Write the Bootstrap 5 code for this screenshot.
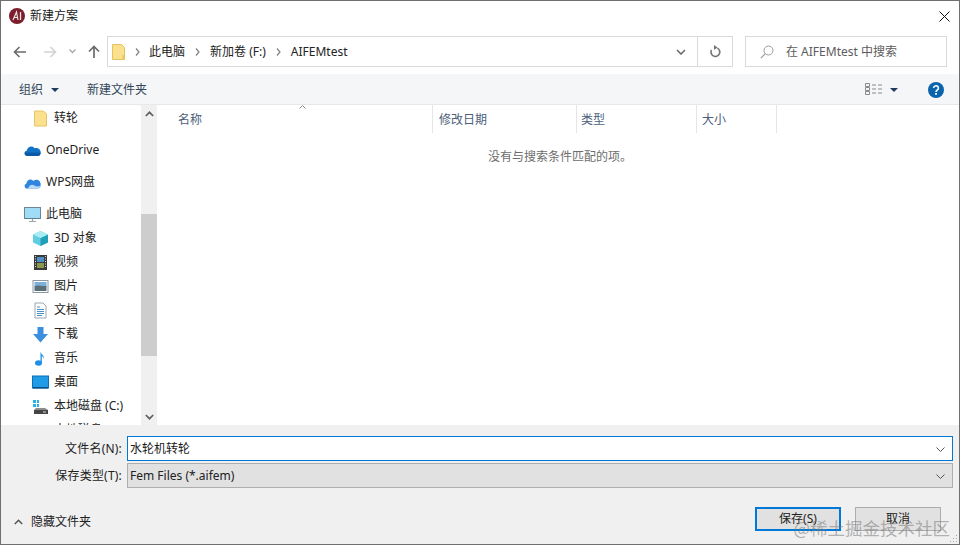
<!DOCTYPE html>
<html lang="zh-CN">
<head>
<meta charset="UTF-8">
<title>新建方案</title>
<link href="https://cdn.jsdelivr.net/npm/bootstrap@5.3.0/dist/css/bootstrap.min.css" rel="stylesheet">
<style>
html, body { height: 100%; margin: 0; overflow: hidden; background: #fff; }
body { font-family: "Noto Sans", "Noto Sans CJK SC", sans-serif; font-size: 12px; line-height: 16px; color: #1a1a1a; }
svg { display: block; flex: none; }
.win { width: 960px; height: 545px; border: 1px solid #6f6f6f; position: relative; background: #fff; }
.titlebar { height: 30px; padding: 0 9px 0 8px; gap: 5px; }
.addr-row { height: 43px; padding: 5px 0 7px 0; }
.navbtns { width: 106px; padding-left: 12px; gap: 13px; }
.fwd-btn { margin-left: 3px; }
.drop-btn { margin-left: -1px; }
.up-btn { margin-left: -1px; }
.addr { width: 626px; height: 31px; border: 1px solid #d9d9d9; }
.addr-path { padding-left: 4px; gap: 8px; color: #222; }
.crumb { margin: 0 2px; }
.crumb-first { margin: 0 1px 0 2px; }
.addr-chev { margin-right: 11px; }
.addr-drop { width: 35px; border-left: 1px solid #d9d9d9; height: 100%; }
.search { width: 202px; height: 31px; margin-left: 12px; border: 1px solid #d9d9d9; padding-left: 14px; gap: 12px; color: #5c5c5c; }
.tools { height: 31px; background: #f5f6f7; border-bottom: 1px solid #e8e8e8; padding: 1px 15px 0 18px; color: #33475b; }
.new-dir { margin-left: 28px; }
.view-caret { margin-left: 8px; }
.help-ico { margin-left: 30px; }
.main-area { height: 320px; }
.side { width: 140px; padding-top: 1px; overflow: hidden; }
.navrow { height: 24px; gap: 5px; white-space: nowrap; color: #222; }
.navrow.ind { padding-left: 31px; }
.navrow.top { padding-left: 23px; }
.navrow.gapped { margin-bottom: 8px; }
.navrow .ico { width: 17px; height: 17px; }
.sbar { width: 16px; background: #f0f0f0; }
.sbar-arrow { height: 17px; }
.sbar-space { height: 92px; }
.sbar-thumb { height: 142px; background: #cdcdcd; }
.files { padding-left: 5px; }
.head-row { height: 28px; }
.hcell { height: 100%; padding: 7px 0 0 6px; border-right: 1px solid #e5e5e5; color: #4c607a; position: relative; }
.w-name { width: 271px; padding-left: 16px; }
.w-date { width: 144px; }
.w-type { width: 120px; padding-left: 4px; }
.w-size { width: 80px; padding-left: 5px; }
.sort-mark { position: absolute; left: 137px; top: 0; }
.empty-msg { margin-top: 16px; padding-right: 1px; color: #6d6d6d; }
.bottom { height: 119px; background: #f0f0f0; }
.form-pane { padding-top: 11px; }
.form-line { height: 25px; margin-bottom: 2px; }
.lbl { width: 126px; padding: 1px 5px 0 0; text-align: right; color: #222; white-space: nowrap; letter-spacing: .2px; }
.fld { width: 826px; height: 100%; padding: 1px 7px 0 2px; }
.fld-name { background: #fff; border: 1px solid #0078d7; }
.fld-type { background: #e1e1e1; border: 1px solid #adadad; color: #222; }
.act-row { height: 24px; margin-top: 17px; padding-right: 18px; }
.hide-dirs { padding: 5px 0 0 13px; gap: 8px; color: #222; }
.dlg-btn { width: 86px; height: 24px; background: #e1e1e1; border: 1px solid #adadad; color: #222; line-height: 20px; text-align: center; font-size: 12px; padding: 0; border-radius: 0; }
.dlg-btn.dflt { border: 2px solid #0078d7; outline: 1px solid #0078d7; outline-offset: -1px; margin-right: 14px; }
.wmark { position: absolute; right: 9px; bottom: 4px; font-size: 17.5px; line-height: 24px; color: rgba(120,120,120,.55); white-space: nowrap; font-family: "Noto Sans CJK SC", sans-serif; pointer-events: none; }
.grip { position: absolute; right: 1px; bottom: 1px; }
</style>
</head>
<body>
<div class="win d-flex flex-column">

    <div class="titlebar d-flex align-items-center">
        <svg width="16" height="16" viewBox="0 0 16 16"><circle cx="8" cy="8" r="8" fill="#7a1f2b"/><path d="M4 12 7.500 4 9 12M5 9.500h4" stroke="#f2e4e4" stroke-width="1.200" fill="none"/><path d="M11.500 4v8" stroke="#f2e4e4" stroke-width="1.300"/></svg>
        <span>新建方案</span>
        <svg class="ms-auto" width="11" height="11" viewBox="0 0 11 11"><path d="M.5.500l10 10M10.500.500l-10 10" stroke="#111" stroke-width="1"/></svg>
    </div>

    <div class="addr-row d-flex align-items-center">
        <div class="navbtns d-flex align-items-center">
            <svg width="14" height="12" viewBox="0 0 14 12"><path d="M13 6H1.500M6.500 1 1.500 6l5 5" stroke="#6b6b6b" stroke-width="1.600" fill="none"/></svg>
            <svg class="fwd-btn" width="14" height="12" viewBox="0 0 14 12"><path d="M1 6h11.500M7.500 1l5 5-5 5" stroke="#d2d2d2" stroke-width="1.600" fill="none"/></svg>
            <svg class="drop-btn" width="7" height="5" viewBox="0 0 7 5"><path d="M.5.500 3.500 3.500 6.500.5" stroke="#a6a6a6" stroke-width="1.400" fill="none"/></svg>
            <svg class="up-btn" width="12" height="13" viewBox="0 0 12 13"><path d="M6 13V1.500M1 6.500l5-5 5 5" stroke="#6b6b6b" stroke-width="1.700" fill="none"/></svg>
        </div>
        <div class="addr d-flex align-items-center">
            <div class="addr-path d-flex align-items-center flex-grow-1">
                <svg width="13" height="16" viewBox="0 0 13 16"><path d="M.5.500h9l3 3v12H.5z" fill="#fbe08e" stroke="#e3c25f"/><path d="M10.500 11h2v4.500h-2z" fill="#eec657"/></svg>
                <svg class="crumb-first" width="5" height="8" viewBox="0 0 5 8"><path d="M1 .5 4 4 1 7.500" stroke="#808080" stroke-width="1.200" fill="none"/></svg>
                <span>此电脑</span>
                <svg class="crumb" width="5" height="8" viewBox="0 0 5 8"><path d="M1 .5 4 4 1 7.500" stroke="#808080" stroke-width="1.200" fill="none"/></svg>
                <span>新加卷 (F:)</span>
                <svg class="crumb" width="5" height="8" viewBox="0 0 5 8"><path d="M1 .5 4 4 1 7.500" stroke="#808080" stroke-width="1.200" fill="none"/></svg>
                <span>AIFEMtest</span>
            </div>
            <svg class="addr-chev" width="10" height="6" viewBox="0 0 10 6"><path d="M1 1l4 4 4-4" stroke="#6b6b6b" stroke-width="1.600" fill="none"/></svg>
            <div class="addr-drop d-flex align-items-center justify-content-center">
                <svg width="12" height="13" viewBox="0 0 12 13"><path d="M6.500 2.500A4.400 4.400 0 1 1 2 6.500" stroke="#757575" stroke-width="1.600" fill="none" transform="rotate(25 6 7)"/><path d="M5 0v5l3.500-2.500z" fill="#757575"/></svg>
            </div>
        </div>
        <div class="search d-flex align-items-center">
            <svg width="14" height="14" viewBox="0 0 14 14"><circle cx="8.500" cy="5.500" r="4.500" stroke="#9a9a9a" fill="none"/><path d="M5.300 8.700.8 13.200" stroke="#9a9a9a" stroke-width="1.200"/></svg>
            <span>在 AIFEMtest 中搜索</span>
        </div>
    </div>

    <div class="tools d-flex align-items-center">
        <span>组织</span>
        <svg class="ms-2" width="8" height="4" viewBox="0 0 8 4"><path d="M0 0h8L4 4z" fill="#1f3a5f"/></svg>
        <span class="new-dir">新建文件夹</span>
        <svg class="ms-auto" width="17" height="13" viewBox="0 0 17 13"><g fill="none" stroke="#8a8a8a"><path d="M.5.500h4v3h-4zM.5 4.500h4v3h-4zM.5 8.500h4v3h-4z"/><path d="M7 2h4M13 2h4M7 6h4M13 6h4M7 10h4M13 10h4"/></g></svg>
        <svg class="view-caret" width="8" height="4" viewBox="0 0 8 4"><path d="M0 0h8L4 4z" fill="#1f3a5f"/></svg>
        <svg class="help-ico" width="16" height="16" viewBox="0 0 16 16"><circle cx="8" cy="8" r="8" fill="#0a63ad"/><path d="M5.600 6.100a2.400 2.300 0 1 1 3.700 1.900c-.9.600-1.300 1-1.300 2" stroke="#fff" stroke-width="1.600" fill="none"/><rect x="7.100" y="11" width="1.800" height="1.800" fill="#fff"/></svg>
    </div>

    <div class="main-area d-flex">
        <div class="side">
            <div class="navrow ind gapped d-flex align-items-center">
                <svg class="ico" viewBox="0 0 17 17"><path d="M2.500 1h9l3 3v12h-12z" fill="#fbe08e" stroke="#e6c565"/></svg><span>转轮</span>
            </div>
            <div class="navrow top gapped d-flex align-items-center">
                <svg class="ico" viewBox="0 0 17 17"><path d="M3.500 14C.2 14-.4 9.400 2.800 8.600 3.700 4.400 8.500 3.300 10.500 6.300c3.200-1.300 6 1 6.200 3.700.1 2-1 4-2.700 4z" fill="#1273c4"/><path d="M3.500 14C1.300 14 .2 12.300.6 10.600h16c.2 1.900-1 3.400-2.600 3.400z" fill="#0a5aa8"/></svg><span>OneDrive</span>
            </div>
            <div class="navrow top gapped d-flex align-items-center">
                <svg class="ico" viewBox="0 0 17 17"><path d="M3 14.500C.2 14.500-.3 10.200 2.400 9.400 3 5.300 7.200 4.200 9.300 7c2.900-2.800 7.400-.6 7.400 3.400 0 2.500-1.200 4.100-3 4.100z" fill="#2f86e0"/><path d="M4 14.500c1-3.300 4-4.700 6-3.300s3.800 1.600 6.500.5c-.5 1.600-1.500 2.800-3 2.800z" fill="#b9d9f7"/></svg><span>WPS网盘</span>
            </div>
            <div class="navrow top d-flex align-items-center">
                <svg class="ico" viewBox="0 0 17 17"><rect x=".5" y="1.500" width="16" height="11" fill="#9fdcf5" stroke="#6f8596"/><path d="M1 12h15v1H1z" fill="#5f7f93"/><path d="M5 15.500h7M8.500 13v2.500" stroke="#9aa6ae" stroke-width="1.200"/></svg><span>此电脑</span>
            </div>
            <div class="navrow ind d-flex align-items-center">
                <svg class="ico" viewBox="0 0 17 17"><path d="M8.500 1 16 4.500v8L8.500 16 1 12.500v-8z" fill="#62cde0"/><path d="M8.500 8 16 4.500v8L8.500 16z" fill="#1f9fb8"/><path d="M8.500 1 16 4.500 8.500 8 1 4.500z" fill="#a8ecf2"/></svg><span>3D 对象</span>
            </div>
            <div class="navrow ind d-flex align-items-center">
                <svg class="ico" viewBox="0 0 17 17"><rect x="2" y="1" width="13" height="15" fill="#3a3a3a"/><rect x="5" y="3" width="7" height="5" fill="#4f8fc9"/><rect x="5" y="9" width="7" height="5" fill="#8a9a4a"/><path d="M3 2.500h1M3 5h1M3 7.500h1M3 10h1M3 12.500h1M13 2.500h1M13 5h1M13 7.500h1M13 10h1M13 12.500h1" stroke="#ddd"/></svg><span>视频</span>
            </div>
            <div class="navrow ind d-flex align-items-center">
                <svg class="ico" viewBox="0 0 17 17"><rect x="1" y="2.500" width="15" height="12" fill="#fff" stroke="#8d98a3"/><rect x="2.500" y="4" width="12" height="5" fill="#7db0d8"/><path d="M2.500 8.500c3-2 5 0 12-.500V13h-12z" fill="#5b6f78"/></svg><span>图片</span>
            </div>
            <div class="navrow ind d-flex align-items-center">
                <svg class="ico" viewBox="0 0 17 17"><path d="M3 1h8l3 3v12H3z" fill="#fdfdfd" stroke="#9aa7b3"/><path d="M5 5h3M5 7.500h7M5 9.500h7M5 11.500h7M5 13.500h5" stroke="#4a91c7"/></svg><span>文档</span>
            </div>
            <div class="navrow ind d-flex align-items-center">
                <svg class="ico" viewBox="0 0 17 17"><path d="M5.500 1h6v7H16l-7.500 8.500L1 8h4.500z" fill="#3b8fdc"/></svg><span>下载</span>
            </div>
            <div class="navrow ind d-flex align-items-center">
                <svg class="ico" viewBox="0 0 17 17"><ellipse cx="6.500" cy="13" rx="3.500" ry="2.800" fill="#1e8fe6"/><path d="M8.500 13V1.500c.5 3 4 3.500 3.500 7.500-.5-2-2-3-2.200-3V13z" fill="#1e8fe6"/></svg><span>音乐</span>
            </div>
            <div class="navrow ind d-flex align-items-center">
                <svg class="ico" viewBox="0 0 17 17"><rect x=".5" y="2" width="16" height="12" fill="#1f9be8" stroke="#0d6fb5"/><path d="M1 13h15v1.500H1z" fill="#0b4f86"/></svg><span>桌面</span>
            </div>
            <div class="navrow ind d-flex align-items-center">
                <svg class="ico" viewBox="0 0 17 17"><path d="M1 2h3v3H1zM5 2h2v3H5zM1 6h3v3H1zM5 6h2v3H5z" fill="#27b2e8"/><path d="M2 12l2-2h9l3 2v4H2z" fill="#8c8c8c"/><rect x="2" y="12" width="14" height="4" fill="#444"/><rect x="11" y="13.500" width="3" height="1" fill="#ddd"/></svg><span>本地磁盘 (C:)</span>
            </div>
            <div class="navrow ind d-flex align-items-center">
                <svg class="ico" viewBox="0 0 17 17"></svg><span>本地磁盘 (D:)</span>
            </div>
        </div>
        <div class="sbar d-flex flex-column">
            <div class="sbar-arrow d-flex align-items-center justify-content-center">
                <svg width="9" height="6" viewBox="0 0 9 6"><path d="M.8 5 4.500 1.300 8.200 5" stroke="#606060" stroke-width="1.700" fill="none"/></svg>
            </div>
            <div class="sbar-space"></div>
            <div class="sbar-thumb"></div>
            <div class="flex-grow-1"></div>
            <div class="sbar-arrow d-flex align-items-center justify-content-center">
                <svg width="9" height="6" viewBox="0 0 9 6"><path d="M.8 1 4.500 4.700 8.200 1" stroke="#606060" stroke-width="1.700" fill="none"/></svg>
            </div>
        </div>
        <div class="files flex-grow-1">
            <div class="head-row d-flex">
                <div class="hcell w-name">名称
                    <svg class="sort-mark" width="7" height="4" viewBox="0 0 7 4"><path d="M.5 3.500 3.500.5l3 3" stroke="#8a8a8a" fill="none"/></svg>
                </div>
                <div class="hcell w-date">修改日期</div>
                <div class="hcell w-type">类型</div>
                <div class="hcell w-size">大小</div>
            </div>
            <div class="empty-msg text-center">没有与搜索条件匹配的项。</div>
        </div>
    </div>

    <div class="bottom d-flex flex-column">
        <div class="form-pane">
            <div class="form-line d-flex align-items-center">
                <div class="lbl">文件名(N):</div>
                <div class="fld fld-name d-flex align-items-center justify-content-between">
                    <span>水轮机转轮</span>
                    <svg width="9" height="5" viewBox="0 0 9 5"><path d="M.5.500l4 4 4-4" stroke="#555" fill="none"/></svg>
                </div>
            </div>
            <div class="form-line d-flex align-items-center">
                <div class="lbl">保存类型(T):</div>
                <div class="fld fld-type d-flex align-items-center justify-content-between">
                    <span>Fem Files (*.aifem)</span>
                    <svg width="9" height="5" viewBox="0 0 9 5"><path d="M.5.500l4 4 4-4" stroke="#555" fill="none"/></svg>
                </div>
            </div>
        </div>
        <div class="act-row d-flex align-items-center">
            <div class="hide-dirs d-flex align-items-center">
                <svg width="9" height="6" viewBox="0 0 9 6"><path d="M.8 5 4.500 1.300 8.200 5" stroke="#555" stroke-width="1.500" fill="none"/></svg>
                <span>隐藏文件夹</span>
            </div>
            <button type="button" class="btn dlg-btn dflt ms-auto">保存(S)</button>
            <button type="button" class="btn dlg-btn">取消</button>
        </div>
    </div>

    <div class="wmark">@稀土掘金技术社区</div>
    <svg class="grip" width="9" height="9" viewBox="0 0 9 9"><path d="M7 1h1v1H7zM4 4h1v1H4zM7 4h1v1H7zM1 7h1v1H1zM4 7h1v1H4zM7 7h1v1H7z" fill="#a8a8a8"/></svg>
</div>
<script src="https://cdn.jsdelivr.net/npm/bootstrap@5.3.0/dist/js/bootstrap.bundle.min.js"></script>
</body>
</html>
